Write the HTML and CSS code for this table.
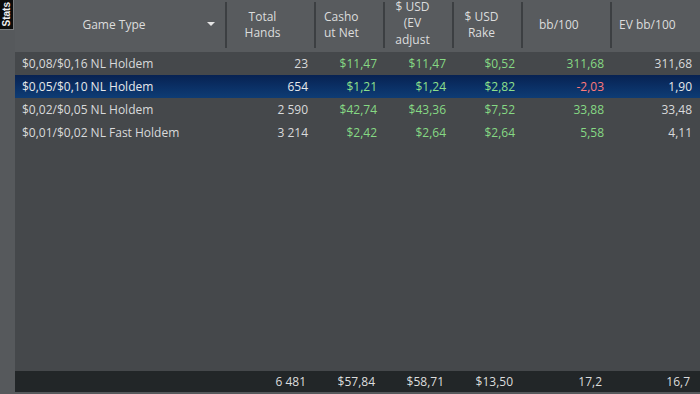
FILE: index.html
```html
<!DOCTYPE html>
<html>
<head>
<meta charset="utf-8">
<link rel="stylesheet" href="styles.css">
</head>
<body>
<div class="app">
  <div class="side">
    <div class="tab"><span class="tab-label">Stats</span></div>
  </div>
  <div class="main">
    <div class="head">
      <div class="hc hc-game"><div class="hc-in"><span class="hc-text">Game Type</span><span class="sort-arrow"></span></div></div>
      <div class="hc hc-hands"><div class="hc-in"><span class="hc-text">Total<br>Hands</span></div></div>
      <div class="hc hc-cash"><div class="hc-in"><span class="hc-text">Casho<br>ut Net</span></div></div>
      <div class="hc hc-ev"><div class="hc-in"><span class="hc-text">$ USD<br>(EV<br>adjust</span></div></div>
      <div class="hc hc-rake"><div class="hc-in"><span class="hc-text">$ USD<br>Rake</span></div></div>
      <div class="hc hc-bb"><div class="hc-in"><span class="hc-text">bb/100</span></div></div>
      <div class="hc hc-evbb"><div class="hc-in"><span class="hc-text">EV bb/100</span></div></div>
    </div>
    <div class="rows">
      <div class="row">
        <div class="c c-name">$0,08/$0,16 NL Holdem</div>
        <div class="c">23</div>
        <div class="c pos">$11,47</div>
        <div class="c pos">$11,47</div>
        <div class="c pos">$0,52</div>
        <div class="c pos">311,68</div>
        <div class="c">311,68</div>
      </div>
      <div class="row row-sel">
        <div class="c c-name">$0,05/$0,10 NL Holdem</div>
        <div class="c">654</div>
        <div class="c pos">$1,21</div>
        <div class="c pos">$1,24</div>
        <div class="c pos">$2,82</div>
        <div class="c neg">-2,03</div>
        <div class="c">1,90</div>
      </div>
      <div class="row">
        <div class="c c-name">$0,02/$0,05 NL Holdem</div>
        <div class="c">2 590</div>
        <div class="c pos">$42,74</div>
        <div class="c pos">$43,36</div>
        <div class="c pos">$7,52</div>
        <div class="c pos">33,88</div>
        <div class="c">33,48</div>
      </div>
      <div class="row">
        <div class="c c-name">$0,01/$0,02 NL Fast Holdem</div>
        <div class="c">3 214</div>
        <div class="c pos">$2,42</div>
        <div class="c pos">$2,64</div>
        <div class="c pos">$2,64</div>
        <div class="c pos">5,58</div>
        <div class="c">4,11</div>
      </div>
    </div>
    <div class="foot">
      <div class="f c-name"></div>
      <div class="f">6 481</div>
      <div class="f">$57,84</div>
      <div class="f">$58,71</div>
      <div class="f">$13,50</div>
      <div class="f">17,2</div>
      <div class="f">16,7</div>
    </div>
    <div class="bottom-line"></div>
  </div>
</div>
</body>
</html>
```

FILE: styles.css
```css
* { box-sizing: border-box; }
html, body {
  margin: 0;
  padding: 0;
  width: 700px;
  height: 394px;
  overflow: hidden;
  background: #56595c;
  font-family: "Open Sans", "Noto Sans", sans-serif;
  font-size: 12px;
  color: #d9dadb;
}
.app {
  display: flex;
  width: 700px;
  height: 394px;
}
.side {
  width: 15px;
  flex: none;
  background: #56595c;
}
.tab {
  width: 14px;
  height: 30px;
  background: #0b0b0b;
  border-right: 1px solid #7a7d80;
  border-bottom: 1px solid #7a7d80;
  display: flex;
  align-items: center;
  justify-content: center;
  overflow: hidden;
}
.tab-label {
  writing-mode: vertical-rl;
  transform: rotate(180deg);
  font-family: "Liberation Sans", sans-serif;
  font-size: 10px;
  font-weight: bold;
  color: #f0f0f0;
  line-height: 12px;
}
.main {
  flex: 1;
  display: flex;
  flex-direction: column;
  min-width: 0;
}
.head, .row, .foot {
  display: grid;
  grid-template-columns: 212px 89px 69px 69px 69px 89px 88px;
}
.head {
  height: 52px;
  background: #585b5e;
}
.hc {
  padding: 2px 0 4px;
  overflow: hidden;
}
.hc-in {
  height: 100%;
  border-right: 2px solid #3c3f42;
  display: flex;
  align-items: center;
  line-height: 16.5px;
  color: #dcdddd;
  position: relative;
}
.hc-evbb .hc-in { border-right: none; }
.hc-game .hc-in { justify-content: center; padding-right: 12px; }
.sort-arrow {
  position: absolute;
  right: 10px;
  top: 20px;
  width: 0;
  height: 0;
  border-left: 4px solid transparent;
  border-right: 4px solid transparent;
  border-top: 4px solid #e4e4e4;
}
.hc-hands .hc-in { justify-content: center; text-align: center; padding-right: 16px; }
.hc-cash .hc-in { padding-left: 8px; }
.hc-ev .hc-in { justify-content: center; text-align: center; padding-right: 12px; }
.hc-rake .hc-in { justify-content: center; text-align: center; padding-right: 12px; }
.hc-bb .hc-in { padding-left: 16px; }
.hc-evbb .hc-in { padding-left: 7px; }
.hc-ev .hc-text { margin-top: -3px; }

.rows {
  flex: 1;
  background: #45484b;
}
.row {
  height: 23px;
  align-items: center;
}
.row-sel {
  background: linear-gradient(#072252, #0b3268 60%, #0e3c74);
}
.c {
  text-align: right;
  padding-right: 8px;
  white-space: nowrap;
}
.c.c-name {
  text-align: left;
  padding-left: 7px;
}
.pos { color: #86d984; }
.neg { color: #ff7777; }
.row-sel .c { color: #e6e8ea; }
.row-sel .pos { color: #8ee08c; }
.row-sel .neg { color: #ff7a7a; }

.foot {
  height: 21px;
  background: #222628;
  align-items: center;
}
.f {
  text-align: right;
  padding-right: 10px;
  color: #dcdddd;
}
.bottom-line {
  height: 2px;
  background: #56595c;
}
```
